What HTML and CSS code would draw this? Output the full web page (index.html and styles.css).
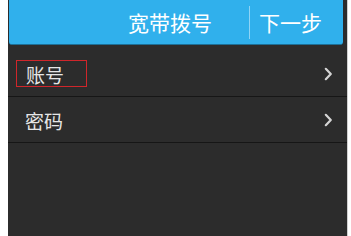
FILE: index.html
```html
<!DOCTYPE html>
<html>
<head>
<meta charset="utf-8">
<link rel="stylesheet" href="styles.css">
</head>
<body>
<div class="screen">
  <header class="topbar">
    <span class="title">宽带拨号</span>
    <span class="divider"></span>
    <span class="next">下一步</span>
  </header>
  <div class="list">
    <div class="row">
      <span class="label boxed">账号</span>
      <svg class="chev" width="9" height="14" viewBox="0 0 9 14"><path d="M1.8 1.8 L6.8 7 L1.8 12.2" fill="none" stroke="#d4d4d4" stroke-width="2.2" stroke-linecap="round" stroke-linejoin="round"/></svg>
    </div>
    <div class="row">
      <span class="label">密码</span>
      <svg class="chev" width="9" height="14" viewBox="0 0 9 14"><path d="M1.8 1.8 L6.8 7 L1.8 12.2" fill="none" stroke="#d4d4d4" stroke-width="2.2" stroke-linecap="round" stroke-linejoin="round"/></svg>
    </div>
  </div>
</div>
</body>
</html>
```
FILE: styles.css
```css
html, body {
  margin: 0;
  padding: 0;
  background: #ffffff;
}
body {
  font-family: "Noto Sans CJK SC", "Noto Sans", sans-serif;
}
.screen {
  margin-left: 8px;
  width: 339px;
  height: 236px;
  background: #2c2c2c;
  border-right: 1px solid #cfcfcf;
  overflow: hidden;
}
.topbar {
  height: 45px;
  margin: 0 4px 0 1px;
  background: #30b0ec;
  border-radius: 0 0 3px 3px;
  border-bottom: 1px solid #1d6f96;
  box-sizing: border-box;
  display: flex;
  align-items: center;
  justify-content: flex-end;
  color: #ffffff;
  font-size: 21px;
}
.title {
  line-height: 1;
}
.divider {
  width: 1px;
  height: 33px;
  background: #8fd4f6;
  margin: 0 9px 0 37px;
}
.next {
  line-height: 1;
  margin-right: 21px;
}
.list {
  padding-top: 6px;
}
.row {
  height: 45px;
  border-bottom: 1px solid #161616;
  display: flex;
  align-items: center;
  justify-content: space-between;
  padding: 0 14px 0 8px;
}
.label {
  color: #e6e6e6;
  font-size: 19px;
  line-height: 1;
  padding-left: 9px;
  padding-top: 2px;
}
.boxed {
  border: 1px solid #d0262b;
  height: 27px;
  box-sizing: border-box;
  width: 71px;
  display: flex;
  align-items: center;
}
.chev {
  display: block;
}
```
